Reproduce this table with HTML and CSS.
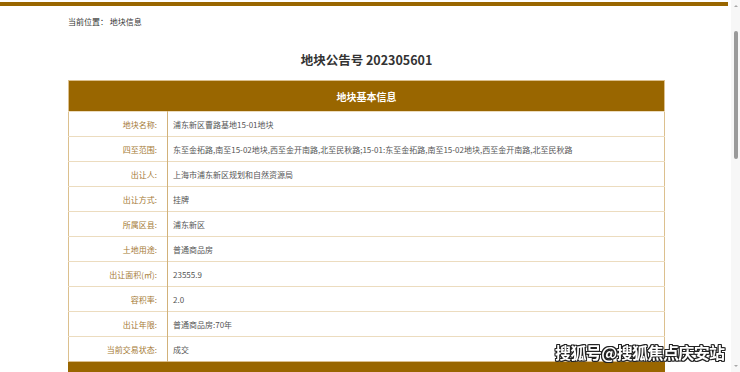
FILE: index.html
```html
<!DOCTYPE html>
<html lang="zh-CN">
<head>
<meta charset="utf-8">
<title>地块信息</title>
<link rel="stylesheet" href="styles.css">
</head>
<body>
<div class="topbar"></div>
<main class="page">
  <div class="crumb">当前位置：&nbsp;地块信息</div>
  <h1 class="title">地块公告号 202305601</h1>
  <table class="info">
    <colgroup><col class="kcol"><col></colgroup>
    <thead>
      <tr><th colspan="2">地块基本信息</th></tr>
    </thead>
    <tbody>
      <tr><td class="k">地块名称:</td><td class="v">浦东新区曹路基地15-01地块</td></tr>
      <tr><td class="k">四至范围:</td><td class="v">东至金拓路,南至15-02地块,西至金开南路,北至民秋路;15-01:东至金拓路,南至15-02地块,西至金开南路,北至民秋路</td></tr>
      <tr><td class="k">出让人:</td><td class="v">上海市浦东新区规划和自然资源局</td></tr>
      <tr><td class="k">出让方式:</td><td class="v">挂牌</td></tr>
      <tr><td class="k">所属区县:</td><td class="v">浦东新区</td></tr>
      <tr><td class="k">土地用途:</td><td class="v">普通商品房</td></tr>
      <tr><td class="k">出让面积(㎡):</td><td class="v">23555.9</td></tr>
      <tr><td class="k">容积率:</td><td class="v">2.0</td></tr>
      <tr><td class="k">出让年限:</td><td class="v">普通商品房:70年</td></tr>
      <tr><td class="k">当前交易状态:</td><td class="v">成交</td></tr>
    </tbody>
  </table>
  <div class="nextbar"></div>
</main>
<div class="scrollbar"><span class="arrow up"></span><span class="thumb"></span><span class="arrow down"></span></div>
<div class="watermark">搜狐号@搜狐焦点庆安站</div>
</body>
</html>
```
FILE: styles.css
```css
html, body {
  margin: 0;
  padding: 0;
  background: #fff;
  font-family: "Noto Sans CJK SC", "Noto Sans", sans-serif;
  color: #333;
  overflow: hidden;
}
.topbar {
  height: 4px;
  margin: 2px 12px 0 0;
  background: #996600;
}
.page {
  width: 597px;
  margin-left: 68px;
}
.crumb {
  font-size: 8px;
  line-height: 10px;
  margin-top: 11px;
  color: #333;
}
.title {
  margin: 24px 0 0;
  font-size: 12.5px;
  line-height: 18px;
  font-weight: bold;
  text-align: center;
  color: #333;
}
.info {
  width: 597px;
  margin-top: 11px;
  border-collapse: collapse;
  border: 1px solid #dcc08e;
  table-layout: fixed;
}
.kcol {
  width: 99px;
}
.info th {
  height: 30px;
  padding: 0;
  background: #996600;
  color: #fff;
  font-size: 10px;
  font-weight: bold;
  text-align: center;
}
.info td {
  height: 24px;
  padding: 0 10px 0 0;
  font-size: 8px;
  border-top: 1px solid #ecdcbf;
  vertical-align: middle;
  white-space: nowrap;
}
.info .k {
  text-align: right;
  color: #a57a36;
  border-right: 1px solid #d2b27a;
}
.info .v {
  padding-left: 5px;
  color: #555;
}
.nextbar {
  height: 30px;
  margin-top: 0;
  background: #996600;
}
.scrollbar {
  position: fixed;
  top: 0;
  right: 0;
  width: 9px;
  height: 372px;
  background: #f7f7f7;
}
.scrollbar .thumb {
  position: absolute;
  left: 3px;
  top: 31px;
  width: 4px;
  height: 128px;
  border-radius: 2px;
  background: #9a9a9a;
}
.scrollbar .arrow {
  position: absolute;
  left: 3px;
  width: 0;
  height: 0;
  border-left: 2px solid transparent;
  border-right: 2px solid transparent;
}
.scrollbar .up {
  top: 5px;
  border-bottom: 2px solid #a8a8a8;
}
.scrollbar .down {
  bottom: 5px;
  border-top: 2px solid #a8a8a8;
}
.watermark {
  position: fixed;
  left: 555px;
  top: 342px;
  font-size: 16px;
  line-height: 20px;
  font-weight: bold;
  color: #fff;
  letter-spacing: -0.6px;
  text-shadow: 1px 0 0 #222, -1px 0 0 #222, 0 1px 0 #222, 0 -1px 0 #222, 1px 1px 0 #222, -1px -1px 0 #222, 1px -1px 0 #222, -1px 1px 0 #222;
}
```
